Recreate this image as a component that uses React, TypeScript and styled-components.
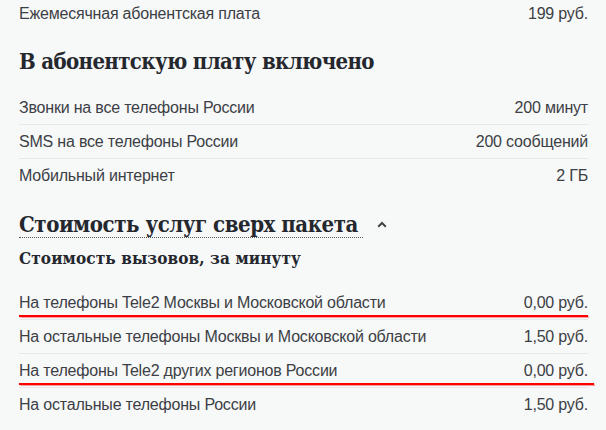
import React from "react";
import styled, { createGlobalStyle } from "styled-components";

const Global = createGlobalStyle`
  html, body { margin: 0; padding: 0; background: #f7f8f8; }
  body { font-family: "Liberation Sans", Arial, sans-serif; color: #3c3f45; }
`;

const Page = styled.div`
  width: 606px;
  height: 430px;
  overflow: hidden;
  box-sizing: border-box;
  padding: 0 18px 0 19px;
  display: flex;
  flex-direction: column;
`;

const Table = styled.div<{ $top?: number }>`
  display: flex;
  flex-direction: column;
  margin-top: ${(p) => p.$top ?? 0}px;
`;

const Row = styled.div<{ $marked?: boolean; $markExtra?: number }>`
  position: relative;
  height: 34px;
  box-sizing: border-box;
  display: flex;
  align-items: center;
  justify-content: space-between;
  font-size: 16px;
  letter-spacing: -0.2px;
  border-bottom: 1px solid #e6e8eb;
  &:last-child { border-bottom: none; }
  ${(p) =>
    p.$marked
      ? `&::after {
          content: "";
          position: absolute;
          left: 0;
          right: ${-(p.$markExtra ?? 0)}px;
          bottom: 2px;
          height: 2px;
          background: #f00;
          box-shadow: 0 0 1px 0.5px rgba(255,60,60,0.5);
        }`
      : ""}
`;

const Label = styled.span``;
const Value = styled.span``;

const serif = `
  font-family: "DejaVu Serif Condensed", "DejaVu Serif", serif;
  font-stretch: condensed;
  font-weight: bold;
  color: #24272d;
`;

const Heading = styled.h2<{ $top: number }>`
  margin: ${(p) => p.$top}px 0 0;
  ${serif}
  font-size: 22px;
  letter-spacing: -0.65px;
  line-height: 30px;
`;

const ToggleHeading = styled.div`
  margin-top: 18px;
  display: flex;
  align-items: center;
  gap: 14px;
`;

const Dotted = styled.span`
  ${serif}
  font-size: 22px;
  letter-spacing: -0.45px;
  line-height: 26px;
  padding-right: 5px;
  border-bottom: 1px dotted #555;
`;

const Chevron = styled.svg`
  width: 10px;
  height: 7px;
`;

const SubHeading = styled.h3`
  margin: 8px 0 0;
  ${serif}
  font-size: 17px;
  letter-spacing: 0.1px;
  line-height: 24px;
`;

const included = [
  ["Звонки на все телефоны России", "200 минут"],
  ["SMS на все телефоны России", "200 сообщений"],
  ["Мобильный интернет", "2 ГБ"],
];

const calls: [string, string, boolean, number][] = [
  ["На телефоны Tele2 Москвы и Московской области", "0,00 руб.", true, 0],
  ["На остальные телефоны Москвы и Московской области", "1,50 руб.", false, 0],
  ["На телефоны Tele2 других регионов России", "0,00 руб.", true, 6],
  ["На остальные телефоны России", "1,50 руб.", false, 0],
];

export default function App() {
  return (
    <>
      <Global />
      <Page>
        <Table $top={-3}>
          <Row>
            <Label>Ежемесячная абонентская плата</Label>
            <Value>199 руб.</Value>
          </Row>
        </Table>
        <Heading $top={15}>В абонентскую плату включено</Heading>
        <Table $top={15}>
          {included.map(([l, v]) => (
            <Row key={l}>
              <Label>{l}</Label>
              <Value>{v}</Value>
            </Row>
          ))}
        </Table>
        <ToggleHeading>
          <Dotted>Стоимость услуг сверх пакета</Dotted>
          <Chevron viewBox="0 0 10 7">
            <path d="M1.2 5.8 L5 2 L8.8 5.8" fill="none" stroke="#444" strokeWidth="2" />
          </Chevron>
        </ToggleHeading>
        <SubHeading>Стоимость вызовов, за минуту</SubHeading>
        <Table $top={16}>
          {calls.map(([l, v, m, e]) => (
            <Row key={l} $marked={m} $markExtra={e}>
              <Label>{l}</Label>
              <Value>{v}</Value>
            </Row>
          ))}
        </Table>
      </Page>
    </>
  );
}
